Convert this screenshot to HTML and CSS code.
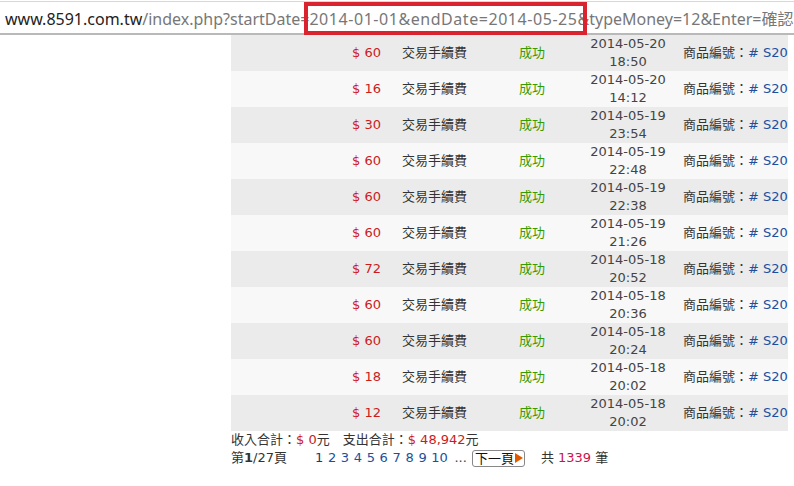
FILE: index.html
```html
<!DOCTYPE html>
<html lang="zh-Hant">
<head>
    <meta charset="UTF-8">
    <title>8591 交易明細</title>
    <link rel="stylesheet" href="styles.css">
</head>
<body>
<div class="addressbar">
    <span class="url"><span class="host">www.8591.com.tw</span>/index.php?startDate=<span class="mark">2014-01-01&amp;endDate=2014-05-25</span>&amp;typeMoney=12&amp;Enter=確認</span>
</div>
<div class="page">
    <table class="records">
        <tr><td class="money">$ 60</td><td class="kind">交易手續費</td><td class="state">成功</td><td class="time">2014-05-20<br>18:50</td><td class="item">商品編號：<a href="#"># S20</a></td></tr>
        <tr><td class="money">$ 16</td><td class="kind">交易手續費</td><td class="state">成功</td><td class="time">2014-05-20<br>14:12</td><td class="item">商品編號：<a href="#"># S20</a></td></tr>
        <tr><td class="money">$ 30</td><td class="kind">交易手續費</td><td class="state">成功</td><td class="time">2014-05-19<br>23:54</td><td class="item">商品編號：<a href="#"># S20</a></td></tr>
        <tr><td class="money">$ 60</td><td class="kind">交易手續費</td><td class="state">成功</td><td class="time">2014-05-19<br>22:48</td><td class="item">商品編號：<a href="#"># S20</a></td></tr>
        <tr><td class="money">$ 60</td><td class="kind">交易手續費</td><td class="state">成功</td><td class="time">2014-05-19<br>22:38</td><td class="item">商品編號：<a href="#"># S20</a></td></tr>
        <tr><td class="money">$ 60</td><td class="kind">交易手續費</td><td class="state">成功</td><td class="time">2014-05-19<br>21:26</td><td class="item">商品編號：<a href="#"># S20</a></td></tr>
        <tr><td class="money">$ 72</td><td class="kind">交易手續費</td><td class="state">成功</td><td class="time">2014-05-18<br>20:52</td><td class="item">商品編號：<a href="#"># S20</a></td></tr>
        <tr><td class="money">$ 60</td><td class="kind">交易手續費</td><td class="state">成功</td><td class="time">2014-05-18<br>20:36</td><td class="item">商品編號：<a href="#"># S20</a></td></tr>
        <tr><td class="money">$ 60</td><td class="kind">交易手續費</td><td class="state">成功</td><td class="time">2014-05-18<br>20:24</td><td class="item">商品編號：<a href="#"># S20</a></td></tr>
        <tr><td class="money">$ 18</td><td class="kind">交易手續費</td><td class="state">成功</td><td class="time">2014-05-18<br>20:02</td><td class="item">商品編號：<a href="#"># S20</a></td></tr>
        <tr><td class="money">$ 12</td><td class="kind">交易手續費</td><td class="state">成功</td><td class="time">2014-05-18<br>20:02</td><td class="item">商品編號：<a href="#"># S20</a></td></tr>
    </table>
    <div class="summary">收入合計：<span class="sum">$ 0</span>元　支出合計：<span class="sum">$ 48,942</span>元</div>
    <div class="pager">
        <span class="pageinfo">第<b>1</b>/27頁</span>
        <span class="pages">
            <a href="#" class="current">1</a>
            <a href="#">2</a>
            <a href="#">3</a>
            <a href="#">4</a>
            <a href="#">5</a>
            <a href="#">6</a>
            <a href="#">7</a>
            <a href="#">8</a>
            <a href="#">9</a>
            <a href="#">10</a>
            <span class="dots">...</span>
        </span>
        <button class="next">下一頁<span class="arrow"></span></button>
        <span class="total">共 <em>1339</em> 筆</span>
    </div>
</div>
</body>
</html>
```

FILE: styles.css
```css
/* 全局樣式 */
body {
    margin: 0;
    background: #fff;
    font-family: "DejaVu Sans", "Noto Sans CJK TC", sans-serif;
    font-size: 13px;
    color: #333;
    overflow: hidden;
}

/* 網址列 */
.addressbar {
    height: 31px;
    border-top: 1px solid #d8d8d8;
    border-bottom: 2px solid #b9b9b9;
    margin-top: 1px;
    display: flex;
    align-items: center;
    padding-left: 5px;
    white-space: nowrap;
    font-family: "Noto Sans", "Noto Sans CJK TC", sans-serif;
    font-size: 16px;
    color: #777;
}

.addressbar .host {
    color: #222;
}

.addressbar .mark {
    position: relative;
    letter-spacing: 0.55px;
}

/* 紅框標示 */
.addressbar .mark::before {
    content: "";
    position: absolute;
    left: -5px;
    right: -10px;
    top: -6px;
    bottom: -5px;
    border: 4px solid #d9232e;
}

/* 內容 */
.page {
    margin-left: 231px;
    width: 557px;
}

.records {
    width: 557px;
    border-collapse: collapse;
    table-layout: fixed;
}

.records tr {
    height: 36px;
    background: #ebebeb;
}

.records tr:nth-child(even) {
    background: #f8f8f8;
}

.records td {
    padding: 0;
    line-height: 18px;
    vertical-align: middle;
    white-space: nowrap;
    overflow: hidden;
}

.money {
    width: 150px;
    text-align: right;
    color: #cc1b1b;
}

.kind {
    width: 89px;
    padding-left: 21px !important;
}

.state {
    width: 82px;
    text-align: center;
    color: #369b00;
}

.time {
    width: 110px;
    text-align: center;
    color: #444;
}

.item {
    width: 105px;
}

.item a {
    color: #1d4f9c;
    text-decoration: none;
}

.summary,
.pager {
    line-height: 18px;
}

.sum {
    color: #cc1b1b;
}

.pager {
    display: flex;
    align-items: center;
}

.pager b {
    font-weight: bold;
}

.pages {
    margin-left: 28px;
    word-spacing: 0.5px;
}

.pages a {
    color: #1d4f9c;
    text-decoration: none;
}

.pages a.current {
    color: #1a3a6e;
}

.dots {
    color: #444;
    margin-left: 2px;
}

.next {
    margin-left: 5px;
    height: 17px;
    padding: 0 1px 0 2px;
    border: 1px solid #888;
    border-radius: 3px;
    background: #fff;
    font-family: inherit;
    font-size: 13px;
    line-height: 15px;
    color: #111;
    display: flex;
    align-items: center;
}

.arrow {
    width: 0;
    height: 0;
    margin-left: 1px;
    border-top: 5px solid transparent;
    border-bottom: 5px solid transparent;
    border-left: 8px solid #e25a00;
}

.total {
    margin-left: 16px;
}

.total em {
    font-style: normal;
    color: #c8144b;
}
```
